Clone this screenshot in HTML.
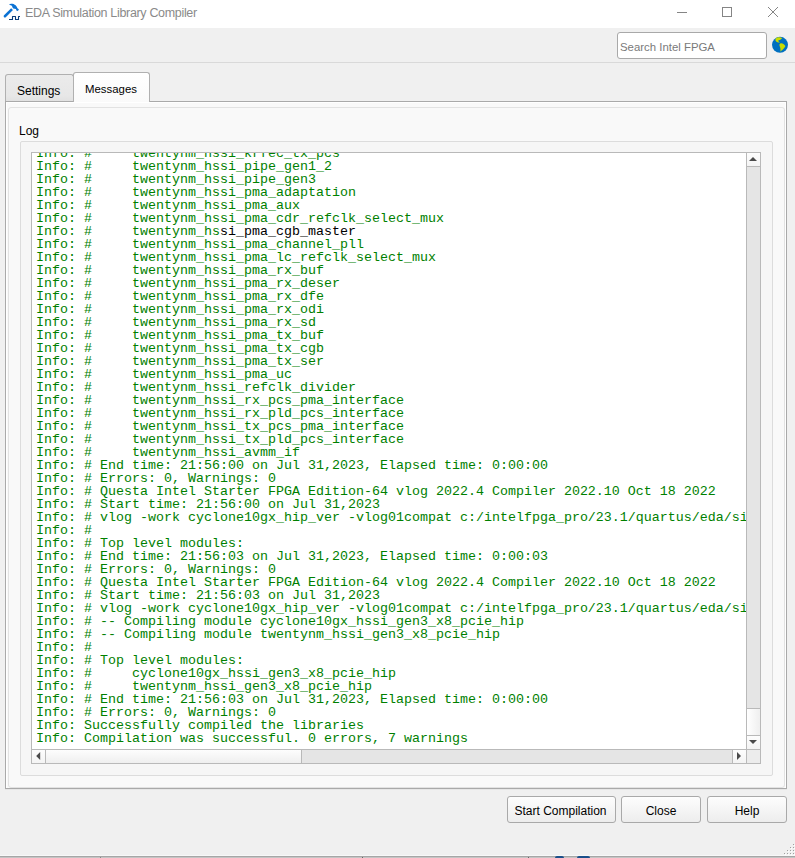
<!DOCTYPE html>
<html><head><meta charset="utf-8">
<style>
*{box-sizing:border-box;margin:0;padding:0}
html,body{width:795px;height:858px;overflow:hidden;background:#f0f0f0;font-family:"Liberation Sans",sans-serif;font-size:12px;color:#000}
.a{position:absolute}
#tb{left:0;top:0;width:795px;height:28px;background:#fff}
#ttl{left:25px;top:6px;font-size:12.5px;letter-spacing:-0.33px;color:#8a8a8a;white-space:nowrap;line-height:14px}
#search{left:617px;top:32px;width:150px;height:27px;background:#fff;border:1px solid #a9a9a9;border-radius:3px}
#stxt{left:620px;top:39.5px;color:#7a7a7a;font-size:11.4px;line-height:14px;white-space:nowrap}
#sep{left:0;top:62px;width:795px;height:1px;background:#d9d9d9}
.tab{border:1px solid #b0b0b0;border-bottom:none;border-radius:3px 3px 0 0}
#t1{left:5px;top:74px;width:69px;height:27px;background:linear-gradient(#ebebeb,#e7e7e7 80%,#e1e1e1)}
#t2{left:73px;top:72px;width:77px;height:30px;background:linear-gradient(#fff,#fafafa)}
#pane{left:5px;top:101px;width:782px;height:688px;border:1px solid #a9a9a9;background:#f9f9f9}
#panein{left:6px;top:102px;width:780px;height:686px;border:1px solid #fff;border-bottom:none}
#inner{left:8px;top:107px;width:777px;height:681px;border:1px solid #e2e2e2;border-radius:3px;background:#f9f9f9}
#grp{left:20px;top:141px;width:753px;height:635px;border:1px solid #dcdcdc;border-radius:2px;background:#f6f6f6}
#log{left:31px;top:152px;width:730px;height:612px;border:1px solid #b9b9b9;background:#fff;overflow:hidden}
#txt{position:absolute;left:4px;top:-6px;font-family:"Liberation Mono",monospace;font-size:13.33px;line-height:13px;color:#008000;white-space:pre}
.btn{border:1px solid #a9a9a9;border-radius:3px;background:linear-gradient(#fdfdfd,#ededed);text-align:center;line-height:29px;font-size:12px;white-space:nowrap}
.lbl{white-space:nowrap;line-height:14px}
.sb{border:1px solid #b9b9b9;background:#e3e3e3}
.arr{background:linear-gradient(#fdfdfd,#f4f4f4);border:1px solid #b9b9b9}
</style></head><body>
<div id="tb" class="a"></div>
<svg class="a" style="left:0;top:0" width="30" height="25" viewBox="0 0 30 25">
<path d="M11.15,8.2 L12.95,10.0 L5.5,17.4 Q4.7,17.9 4.0,17.2 Q3.4,16.5 3.8,15.6 Z" fill="#0b72d4"/>
<path d="M9.0,4.5 C9.8,3.8 11.5,3.6 12.5,3.8 C14,4.1 15.5,5 16.4,6.3 C16.9,7 17.2,7.7 17.4,8.2 L18.9,9.2 L18.1,10.7 L16.9,10.9 L16.3,10.1 L15.9,9.1 C15.2,8.9 14,8.8 13.4,8.5 C12.7,8.1 12.4,7.2 12.1,6.2 C11.8,5.4 11,5 10,4.9 Z" fill="#0b72d4"/>
<path d="M9,19.5 H12.5 V16.5 H15.5 V19.5 H18.5 V16.5 H20" fill="none" stroke="#0a3d7a" stroke-width="1.1" stroke-linejoin="round"/>
</svg>
<div id="ttl" class="a">EDA Simulation Library Compiler</div>
<div class="a" style="left:677px;top:12px;width:10px;height:1px;background:#858585"></div>
<div class="a" style="left:722px;top:7px;width:10px;height:10px;border:1px solid #858585"></div>
<svg class="a" style="left:766px;top:5px" width="14" height="14" viewBox="0 0 14 14"><path d="M2,2 L12,12 M12,2 L2,12" stroke="#858585" stroke-width="1"/></svg>
<div id="search" class="a"></div>
<div id="stxt" class="a">Search Intel FPGA</div>
<svg class="a" style="left:765px;top:30px" width="30" height="30" viewBox="0 0 30 30">
<circle cx="15" cy="14.8" r="8" fill="#0070c0"/>
<path d="M10.8,8.5 C12,7.2 15,7 17.2,8 C16.5,9.2 15,10 13.8,10.3 C13,10.5 13.2,11.5 14.2,12 L14.8,12.8 C13.3,12.7 11.5,12 10.8,11 C10.2,10.2 10.3,9.2 10.8,8.5 Z" fill="#c8dc00"/>
<path d="M15.3,13.6 C17,12.8 18.8,14 20.2,15.8 C20.5,16.5 20,17.2 19.2,18 C18.2,19.3 16.5,20.5 15.4,21.8 C15.6,20 15.6,18.5 15,17 C14.2,15.5 14.2,14.2 15.3,13.6 Z" fill="#c8dc00"/>
</svg>
<div id="sep" class="a"></div>
<div id="pane" class="a"></div>
<div id="panein" class="a"></div>
<div class="a" style="left:5px;top:789px;width:782px;height:1px;background:#e6e6e6"></div>
<div id="t1" class="a tab"></div>
<div id="t2" class="a tab"></div>
<div class="a lbl" style="left:17px;top:83.5px">Settings</div>
<div class="a lbl" style="left:85px;top:82px;font-size:11.4px">Messages</div>
<div id="inner" class="a"></div>
<div class="a lbl" style="left:19px;top:124px">Log</div>
<div id="grp" class="a"></div>
<div id="log" class="a"><div id="txt">Info: #     twentynm_hssi_krfec_tx_pcs
Info: #     twentynm_hssi_pipe_gen1_2
Info: #     twentynm_hssi_pipe_gen3
Info: #     twentynm_hssi_pma_adaptation
Info: #     twentynm_hssi_pma_aux
Info: #     twentynm_hssi_pma_cdr_refclk_select_mux
Info: #     twentynm_hs<span style="color:#000">si_pma_cgb_master</span>
Info: #     twentynm_hssi_pma_channel_pll
Info: #     twentynm_hssi_pma_lc_refclk_select_mux
Info: #     twentynm_hssi_pma_rx_buf
Info: #     twentynm_hssi_pma_rx_deser
Info: #     twentynm_hssi_pma_rx_dfe
Info: #     twentynm_hssi_pma_rx_odi
Info: #     twentynm_hssi_pma_rx_sd
Info: #     twentynm_hssi_pma_tx_buf
Info: #     twentynm_hssi_pma_tx_cgb
Info: #     twentynm_hssi_pma_tx_ser
Info: #     twentynm_hssi_pma_uc
Info: #     twentynm_hssi_refclk_divider
Info: #     twentynm_hssi_rx_pcs_pma_interface
Info: #     twentynm_hssi_rx_pld_pcs_interface
Info: #     twentynm_hssi_tx_pcs_pma_interface
Info: #     twentynm_hssi_tx_pld_pcs_interface
Info: #     twentynm_hssi_avmm_if
Info: # End time: 21:56:00 on Jul 31,2023, Elapsed time: 0:00:00
Info: # Errors: 0, Warnings: 0
Info: # Questa Intel Starter FPGA Edition-64 vlog 2022.4 Compiler 2022.10 Oct 18 2022
Info: # Start time: 21:56:00 on Jul 31,2023
Info: # vlog -work cyclone10gx_hip_ver -vlog01compat c:/intelfpga_pro/23.1/quartus/eda/sim_lib
Info: #
Info: # Top level modules:
Info: # End time: 21:56:03 on Jul 31,2023, Elapsed time: 0:00:03
Info: # Errors: 0, Warnings: 0
Info: # Questa Intel Starter FPGA Edition-64 vlog 2022.4 Compiler 2022.10 Oct 18 2022
Info: # Start time: 21:56:03 on Jul 31,2023
Info: # vlog -work cyclone10gx_hip_ver -vlog01compat c:/intelfpga_pro/23.1/quartus/eda/sim_lib
Info: # -- Compiling module cyclone10gx_hssi_gen3_x8_pcie_hip
Info: # -- Compiling module twentynm_hssi_gen3_x8_pcie_hip
Info: #
Info: # Top level modules:
Info: #     cyclone10gx_hssi_gen3_x8_pcie_hip
Info: #     twentynm_hssi_gen3_x8_pcie_hip
Info: # End time: 21:56:03 on Jul 31,2023, Elapsed time: 0:00:00
Info: # Errors: 0, Warnings: 0
Info: Successfully compiled the libraries
Info: Compilation was successful. 0 errors, 7 warnings</div></div>
<div class="a btn" style="left:507px;top:796px;width:109px;height:27px;padding-right:2px">Start Compilation</div>
<div class="a btn" style="left:621px;top:796px;width:80px;height:27px">Close</div>
<div class="a btn" style="left:707px;top:796px;width:80px;height:27px">Help</div>

<div class="a" style="left:746px;top:152px;width:15px;height:612px;background:#e5e5e5;border:1px solid #b9b9b9"></div>
<div class="a arr" style="left:746px;top:152px;width:15px;height:15px"></div>
<svg class="a" style="left:746px;top:152px" width="15" height="15"><path d="M3,9 L11,9 L7,5 Z" fill="#4a4a4a"/></svg>
<div class="a" style="left:746px;top:708px;width:15px;height:28px;border:1px solid #b9b9b9;background:linear-gradient(90deg,#fff,#efefef)"></div>
<div class="a arr" style="left:746px;top:735px;width:15px;height:15px"></div>
<svg class="a" style="left:746px;top:735px" width="15" height="15"><path d="M3,5 L11,5 L7,9 Z" fill="#4a4a4a"/></svg>
<div class="a" style="left:31px;top:749px;width:716px;height:15px;background:#e5e5e5;border:1px solid #b9b9b9"></div>
<div class="a arr" style="left:31px;top:749px;width:15px;height:15px"></div>
<svg class="a" style="left:31px;top:749px" width="15" height="15"><path d="M9.2,3 L9.2,11 L5.2,7 Z" fill="#4a4a4a"/></svg>
<div class="a" style="left:45px;top:749px;width:257px;height:15px;border:1px solid #b9b9b9;background:linear-gradient(#fdfdfd,#efefef)"></div>
<div class="a arr" style="left:732px;top:749px;width:15px;height:15px"></div>
<svg class="a" style="left:732px;top:749px" width="15" height="15"><path d="M5,3 L5,11 L9,7 Z" fill="#4a4a4a"/></svg>
<div class="a" style="left:746px;top:749px;width:15px;height:15px;background:#ececec;border:1px solid #b9b9b9"></div>
<svg class="a" style="left:780px;top:840px" width="15" height="16"><rect x="14" y="5" width="1" height="1" fill="#fff"/><rect x="13" y="4" width="1" height="1" fill="#a0a0a0"/><rect x="11" y="8" width="1" height="1" fill="#fff"/><rect x="10" y="7" width="1" height="1" fill="#a0a0a0"/><rect x="14" y="8" width="1" height="1" fill="#fff"/><rect x="13" y="7" width="1" height="1" fill="#a0a0a0"/><rect x="8" y="11" width="1" height="1" fill="#fff"/><rect x="7" y="10" width="1" height="1" fill="#a0a0a0"/><rect x="11" y="11" width="1" height="1" fill="#fff"/><rect x="10" y="10" width="1" height="1" fill="#a0a0a0"/><rect x="14" y="11" width="1" height="1" fill="#fff"/><rect x="13" y="10" width="1" height="1" fill="#a0a0a0"/><rect x="5" y="14" width="1" height="1" fill="#fff"/><rect x="4" y="13" width="1" height="1" fill="#a0a0a0"/><rect x="8" y="14" width="1" height="1" fill="#fff"/><rect x="7" y="13" width="1" height="1" fill="#a0a0a0"/><rect x="11" y="14" width="1" height="1" fill="#fff"/><rect x="10" y="13" width="1" height="1" fill="#a0a0a0"/><rect x="14" y="14" width="1" height="1" fill="#fff"/><rect x="13" y="13" width="1" height="1" fill="#a0a0a0"/></svg>
<div class="a" style="left:0;top:855px;width:795px;height:1px;background:#f8f8f8"></div>
<div class="a" style="left:0;top:856px;width:795px;height:1px;background:#a6a6a6"></div>
<div class="a" style="left:0;top:857px;width:795px;height:1px;background:#c4c4c4"></div>
<div class="a" style="left:100px;top:857px;width:1px;height:1px;background:#888"></div>
<div class="a" style="left:362px;top:857px;width:1px;height:1px;background:#666"></div>
<div class="a" style="left:528px;top:857px;width:1px;height:1px;background:#666"></div>
<div class="a" style="left:555px;top:856px;width:9px;height:2px;background:#1a4f8a;border-radius:3px 3px 0 0"></div>
<div class="a" style="left:577px;top:856px;width:13px;height:2px;background:#1a4f8a;border-radius:3px 3px 0 0"></div>
</body></html>
